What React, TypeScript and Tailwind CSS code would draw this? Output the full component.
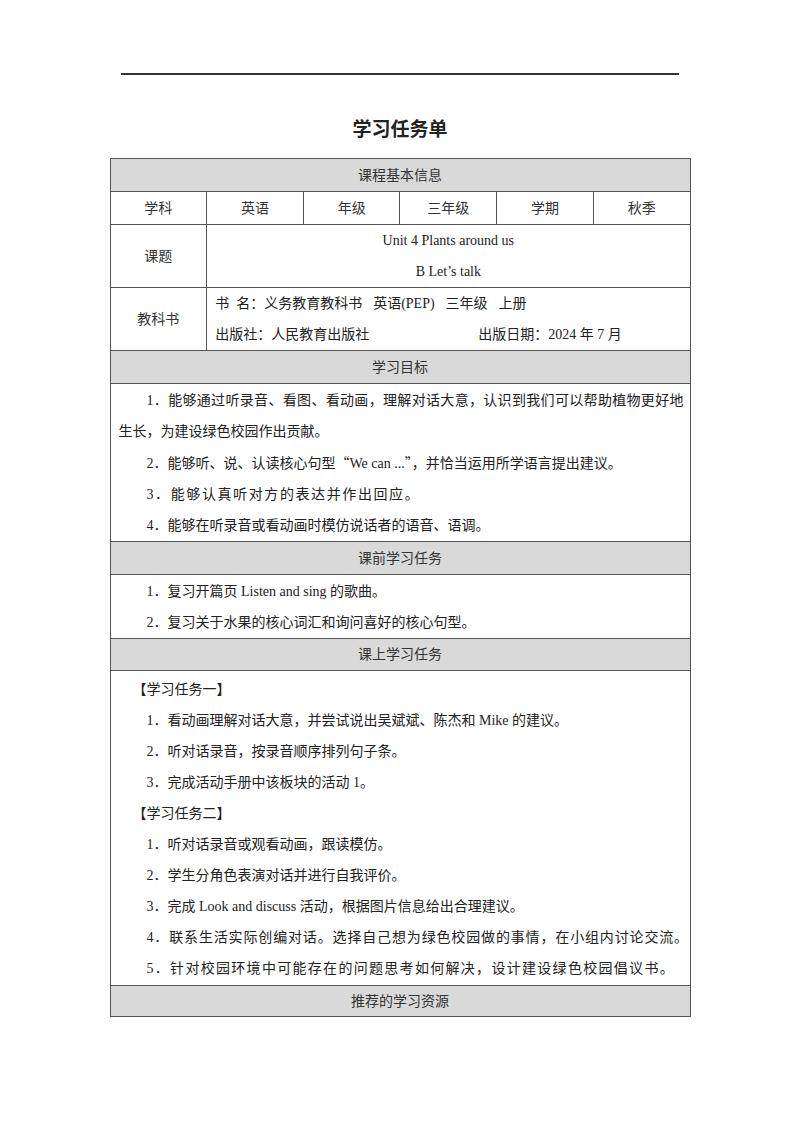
const font = "font-['Liberation_Serif','Noto_Sans_CJK_SC',serif]";
const cjk = "font-['Noto_Sans_CJK_SC',sans-serif]";
const line = "border border-[#555]";

const Head = ({ children, h = 'h-[33px]' }: { children: React.ReactNode; h?: string }) => (
  <tr>
    <td colSpan={6} className={`${line} ${h} bg-[#d9d9d9] p-0 text-center text-[#333]`}>
      {children}
    </td>
  </tr>
);

const Item = ({ children, className = '' }: { children: React.ReactNode; className?: string }) => (
  <div className={`indent-[28px] leading-[31px] ${className}`}>{children}</div>
);

const Gap = () => <span className="inline-block w-[11px]"></span>;

const App = () => {
  return (
    <div className={`min-h-[1132px] w-full bg-white pt-[73px] text-[14px] text-[#222] ${font}`}>
      <div className="mx-auto h-[2px] w-[558px] bg-[#333]"></div>
      <h1 className={`mt-[40px] text-center text-[19px] font-bold leading-[26px] ${cjk}`}>学习任务单</h1>
      <table className="mx-auto mt-[17px] w-[581px] table-fixed border-collapse">
        <tbody>
          <Head>课程基本信息</Head>
          <tr>
            {['学科', '英语', '年级', '三年级', '学期', '秋季'].map((t) => (
              <td key={t} className={`${line} h-[33px] p-0 text-center text-[#333]`}>
                {t}
              </td>
            ))}
          </tr>
          <tr>
            <td className={`${line} h-[63px] p-0 text-center text-[#333]`}>课题</td>
            <td colSpan={5} className={`${line} p-0 text-center`}>
              <div className="leading-[31px]">Unit 4 Plants around us</div>
              <div className="leading-[31px]">B Let’s talk</div>
            </td>
          </tr>
          <tr>
            <td className={`${line} h-[63px] p-0 text-center text-[#333]`}>教科书</td>
            <td colSpan={5} className={`${line} px-[8px] py-0`}>
              <div className="leading-[31px]">
                书<span className="inline-block w-[7px]"></span>名：义务教育教科书<Gap />英语(PEP)<Gap />三年级
                <Gap />上册
              </div>
              <div className="flex leading-[31px]">
                <span className="w-[263px]">出版社：人民教育出版社</span>
                <span>出版日期：2024 年 7 月</span>
              </div>
            </td>
          </tr>
          <Head>学习目标</Head>
          <tr>
            <td colSpan={6} className={`${line} h-[157px] pl-[8px] pr-[6px] pt-[1px] pb-0`}>
              <div className="indent-[28px] text-justify leading-[31px] [text-align-last:justify]">
                1．能够通过听录音、看图、看动画，理解对话大意，认识到我们可以帮助植物更好地
              </div>
              <div className="leading-[31px]">生长，为建设绿色校园作出贡献。</div>
              <Item>
                2．能够听、说、认读核心句型<span className={cjk}>“</span>We can ...<span className={cjk}>”</span>
                ，并恰当运用所学语言提出建议。
              </Item>
              <Item className="tracking-[1.6px]">3．能够认真听对方的表达并作出回应。</Item>
              <Item>4．能够在听录音或看动画时模仿说话者的语音、语调。</Item>
            </td>
          </tr>
          <Head>课前学习任务</Head>
          <tr>
            <td colSpan={6} className={`${line} h-[63px] pl-[8px] pr-[6px] pt-[1px] pb-0`}>
              <Item>1．复习开篇页 Listen and sing 的歌曲。</Item>
              <Item>2．复习关于水果的核心词汇和询问喜好的核心句型。</Item>
            </td>
          </tr>
          <Head h="h-[32px]">课上学习任务</Head>
          <tr>
            <td colSpan={6} className={`${line} h-[315px] pl-[8px] pr-[4px] pt-[1px] pb-0`}>
              <div className="indent-[14px] leading-[31px]">【学习任务一】</div>
              <Item>1．看动画理解对话大意，并尝试说出吴斌斌、陈杰和 Mike 的建议。</Item>
              <Item>2．听对话录音，按录音顺序排列句子条。</Item>
              <Item>3．完成活动手册中该板块的活动 1。</Item>
              <div className="indent-[14px] leading-[31px]">【学习任务二】</div>
              <Item>1．听对话录音或观看动画，跟读模仿。</Item>
              <Item>2．学生分角色表演对话并进行自我评价。</Item>
              <Item>3．完成 Look and discuss 活动，根据图片信息给出合理建议。</Item>
              <Item className="whitespace-nowrap tracking-[0.85px]">
                4．联系生活实际创编对话。选择自己想为绿色校园做的事情，在小组内讨论交流。
              </Item>
              <Item className="whitespace-nowrap tracking-[1.3px]">
                5．针对校园环境中可能存在的问题思考如何解决，设计建设绿色校园倡议书。
              </Item>
            </td>
          </tr>
          <Head h="h-[31px]">推荐的学习资源</Head>
        </tbody>
      </table>
    </div>
  );
};

export default App;
